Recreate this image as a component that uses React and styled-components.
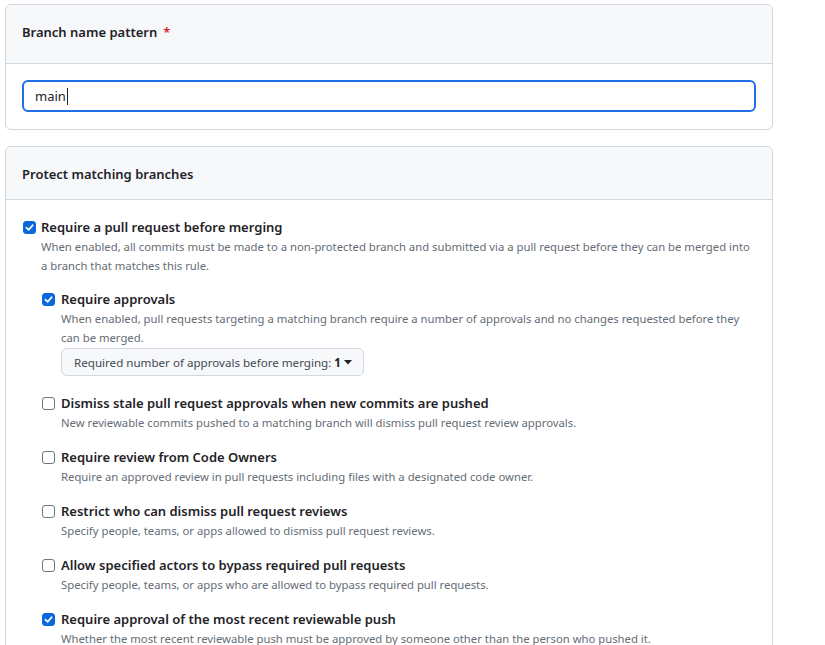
import React from "react";
import styled, { createGlobalStyle } from "styled-components";

const Global = createGlobalStyle`
  html, body { margin: 0; padding: 0; overflow: hidden; background: #ffffff; }
  body { font-family: "Noto Sans", "Liberation Sans", sans-serif; color: #1f2328; }
`;

const Page = styled.div`
  width: 768px;
  padding: 4px 0 0 5px;
  display: flex;
  flex-direction: column;
  gap: 16px;
`;

const Box = styled.section`
  border: 1px solid #d0d7de;
  border-radius: 6px;
  background: #ffffff;
  overflow: hidden;
`;

const BoxHeader = styled.div`
  background: #f6f8fa;
  border-bottom: 1px solid #d0d7de;
  padding: ${(p) => (p.$tall ? "17px 16px 21px" : "17px 16px 15px")};
  font-size: 13px;
  line-height: 20px;
  font-weight: 600;
  color: #1f2328;
`;

const Required = styled.span`
  color: #d1242f;
  margin-left: 6px;
  font-weight: 600;
`;

const BoxBody = styled.div`
  padding: ${(p) => (p.$extra ? "16px 16px 17px" : "16px")};
`;

const FakeInput = styled.div`
  height: 32px;
  box-sizing: border-box;
  border: 2px solid #1f6feb;
  border-radius: 6px;
  padding: 0 11px;
  display: flex;
  align-items: center;
  font-size: 13px;
  color: #1f2328;
`;

const Caret = styled.span`
  display: inline-block;
  width: 1px;
  height: 17px;
  background: #1f2328;
  margin-left: 1px;
`;

const List = styled.div`
  display: flex;
  flex-direction: column;
  gap: 15px;
  margin-left: ${(p) => (p.$nested ? "1px" : "0")};
  margin-top: ${(p) => (p.$nested ? "14px" : "1px")};
  padding-left: ${(p) => (p.$nested ? "0" : "1px")};
`;

const Item = styled.div`
  display: grid;
  grid-template-columns: 13px 1fr;
  column-gap: ${(p) => (p.$nested ? "6px" : "5px")};
`;

const Box13 = styled.span`
  width: 13px;
  height: 13px;
  box-sizing: border-box;
  margin-top: 4px;
  border-radius: 3px;
  display: flex;
  align-items: center;
  justify-content: center;
  background: ${(p) => (p.$checked ? "#0969da" : "#ffffff")};
  border: 1px solid ${(p) => (p.$checked ? "#0969da" : "#6e7781")};
`;

const Content = styled.div`
  min-width: 0;
`;

const Label = styled.div`
  font-size: 13px;
  line-height: 20px;
  font-weight: 600;
  color: #1f2328;
`;

const Desc = styled.div`
  font-size: 11.3px;
  line-height: 19px;
  color: #656d76;
`;

const SelectButton = styled.button`
  margin: 1px 0 2px;
  height: 28px;
  box-sizing: border-box;
  padding: 0 11px 0 12px;
  border: 1px solid #d0d7de;
  border-radius: 6px;
  background: #f6f8fa;
  font-family: inherit;
  font-size: 11.6px;
  color: #424a53;
  display: inline-flex;
  align-items: center;
  gap: 3px;
`;

const Strong = styled.b`
  color: #1f2328;
  font-weight: 700;
`;

function Check({ checked }) {
  return (
    <Box13 $checked={checked}>
      {checked && (
        <svg width="9" height="9" viewBox="0 0 10 10">
          <path d="M1.5 5.2 L4 7.6 L8.6 2.4" fill="none" stroke="#fff" strokeWidth="1.8" strokeLinecap="round" strokeLinejoin="round" />
        </svg>
      )}
    </Box13>
  );
}

function Option({ checked, nested, label, desc, children }) {
  return (
    <Item $nested={nested}>
      <Check checked={checked} />
      <Content>
        <Label>{label}</Label>
        <Desc>{desc}</Desc>
        {children}
      </Content>
    </Item>
  );
}

const nestedOptions = [
  {
    label: "Dismiss stale pull request approvals when new commits are pushed",
    desc: "New reviewable commits pushed to a matching branch will dismiss pull request review approvals.",
  },
  {
    label: "Require review from Code Owners",
    desc: "Require an approved review in pull requests including files with a designated code owner.",
  },
  {
    label: "Restrict who can dismiss pull request reviews",
    desc: "Specify people, teams, or apps allowed to dismiss pull request reviews.",
  },
  {
    label: "Allow specified actors to bypass required pull requests",
    desc: "Specify people, teams, or apps who are allowed to bypass required pull requests.",
  },
  {
    checked: true,
    label: "Require approval of the most recent reviewable push",
    desc: "Whether the most recent reviewable push must be approved by someone other than the person who pushed it.",
  },
];

export default function App() {
  return (
    <>
      <Global />
      <Page>
        <Box>
          <BoxHeader $tall>
            Branch name pattern<Required>*</Required>
          </BoxHeader>
          <BoxBody $extra>
            <FakeInput role="textbox">
              main<Caret />
            </FakeInput>
          </BoxBody>
        </Box>
        <Box>
          <BoxHeader>Protect matching branches</BoxHeader>
          <BoxBody>
            <List>
              <Option
                checked
                label="Require a pull request before merging"
                desc="When enabled, all commits must be made to a non-protected branch and submitted via a pull request before they can be merged into a branch that matches this rule."
              >
                <List $nested>
                  <Option
                    checked
                    nested
                    label="Require approvals"
                    desc="When enabled, pull requests targeting a matching branch require a number of approvals and no changes requested before they can be merged."
                  >
                    <SelectButton type="button">
                      Required number of approvals before merging: <Strong>1</Strong>
                      <svg width="8" height="5" viewBox="0 0 8 5">
                        <path d="M0 0 L8 0 L4 4.5 Z" fill="#1f2328" />
                      </svg>
                    </SelectButton>
                  </Option>
                  {nestedOptions.map((n) => (
                    <Option key={n.label} nested checked={n.checked} label={n.label} desc={n.desc} />
                  ))}
                </List>
              </Option>
            </List>
          </BoxBody>
        </Box>
      </Page>
    </>
  );
}
